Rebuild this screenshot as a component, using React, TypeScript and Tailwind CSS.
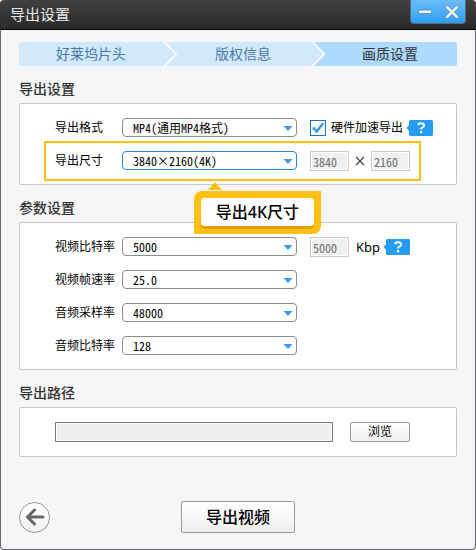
import { useId, useState } from "react";
import type { ReactNode } from "react";
import { clsx } from "clsx";

const STEPS = ["好莱坞片头", "版权信息", "画质设置"];

const PARAMS = [
  { label: "视频比特率", options: ["5000", "8000"] },
  { label: "视频帧速率", options: ["25.0", "30.0"] },
  { label: "音频采样率", options: ["48000", "44100"] },
  { label: "音频比特率", options: ["128", "192"] },
];

export default function App() {
  const [hardware, setHardware] = useState(true);

  return (
    <div className="flex min-h-screen flex-col bg-white font-['Noto_Sans','Noto_Sans_CJK_SC',sans-serif] text-xs text-black">
      <TitleBar />
      <main className="flex-1 rounded-b-[4px] border border-t-0 border-[#66676b] bg-[#f5f6f8] px-[18px] pt-3 pb-4">
        <Steps current={2} />

        <Section title="导出设置">
          <Row>
            <Field label="导出格式" options={["MP4(通用MP4格式)", "AVI"]} />
            <label className="flex items-center gap-[5px] whitespace-nowrap">
              <span className="relative flex">
                <input
                  type="checkbox"
                  checked={hardware}
                  onChange={(e) => setHardware(e.target.checked)}
                  className="h-4 w-4 appearance-none border border-[#1b74bd] bg-white"
                />
                {hardware && (
                  <svg viewBox="0 0 16 16" className="pointer-events-none absolute inset-0 h-4 w-4">
                    <path d="M2 8.2 4 6.6 6.4 9.4 12.4 2.6 14.4 3.4 6.8 13.6Z" fill="#3a9ced" />
                  </svg>
                )}
              </span>
              硬件加速导出
            </label>
            <HelpButton />
          </Row>

          {/* 高亮行 */}
          <Row>
            <Field label="导出尺寸" options={["3840×2160(4K)", "1920×1080"]} active />
            <SmallInput label="宽度" value="3840" />
            <svg viewBox="0 0 10 10" className="mx-1.5 h-2.5 w-2.5" stroke="#444" strokeWidth="1.2">
              <path d="M1 1 9 9M9 1 1 9" />
            </svg>
            <SmallInput label="高度" value="2160" />
            <div className="pointer-events-none absolute -inset-x-[11px] -inset-y-[10px] border-2 border-[#ffc012]" />
            <Callout text="导出4K尺寸" />
          </Row>
        </Section>

        <Section title="参数设置">
          {PARAMS.map((p, i) => (
            <Row key={p.label}>
              <Field label={p.label} options={p.options} />
              {i === 0 && (
                <>
                  <SmallInput label="自定义比特率" value="5000" />
                  <span className="ml-[7px] text-[13px] leading-5">Kbp</span>
                  <HelpButton />
                </>
              )}
            </Row>
          ))}
        </Section>

        <Section title="导出路径">
          <div className="flex h-[21px] gap-[17px]">
            <input
              type="text"
              aria-label="导出路径"
              readOnly
              className="h-5 w-[278px] border border-[#77787a] bg-[#efefef] px-1 shadow-[inset_0_0_0_1px_#fff] outline-none"
            />
            <button className="h-5 w-[60px] rounded-[2px] border border-[#999] bg-linear-to-b from-white to-[#efefef] leading-[18px]">
              浏览
            </button>
          </div>
        </Section>

        <footer className="mt-11 grid grid-cols-[1fr_auto_1fr] items-center">
          <button
            aria-label="返回"
            className="flex h-[31px] w-[31px] items-center justify-center rounded-full border border-[#999] bg-linear-to-b from-white to-[#f0f0f0]"
          >
            <svg viewBox="0 0 20 20" className="h-5 w-5" fill="none" stroke="#666" strokeWidth="3" strokeLinecap="round" strokeLinejoin="round">
              <path d="M9.5 3 2.5 10 9.5 17M3.5 10H18" />
            </svg>
          </button>
          <button className="h-8 w-[114px] rounded-[2px] border border-[#999] bg-linear-to-b from-white to-[#efefef] text-base leading-[30px] font-medium">
            导出视频
          </button>
        </footer>
      </main>
    </div>
  );
}

function TitleBar() {
  return (
    <header className="flex h-[30px] items-start justify-between rounded-t-[4px] border-b border-black bg-linear-to-b from-[#404040] to-[#2a2a2a] pr-2.5 pl-2.5">
      <h1 className="text-[15px] leading-[29px] text-[#e8e8e8]">导出设置</h1>
      <div className="flex h-6 w-[56px] rounded-b-[4px] border border-t-0 border-[#5b6b78] bg-linear-to-b from-[#69bdf8] to-[#2a9ff5]">
        <button aria-label="最小化" className="flex flex-1 items-center justify-center">
          <svg viewBox="0 0 14 14" className="h-3.5 w-3.5">
            <rect x="0.5" y="5" width="13" height="3.6" rx="1" fill="#f4f4f4" stroke="#4c87b3" strokeWidth="0.8" />
          </svg>
        </button>
        <button aria-label="关闭" className="flex flex-1 items-center justify-center">
          <svg viewBox="0 0 14 14" className="h-3.5 w-3.5" strokeLinecap="round">
            <path d="M2 2 12 12M12 2 2 12" stroke="#4c87b3" strokeWidth="3.8" />
            <path d="M2 2 12 12M12 2 2 12" stroke="#f4f4f4" strokeWidth="2.5" />
          </svg>
        </button>
      </div>
    </header>
  );
}

function Steps({ current }: { current: number }) {
  return (
    <ol className="grid h-6 grid-cols-[144fr_148fr_146fr] overflow-hidden rounded-[2px] text-sm leading-[23px]">
      {STEPS.map((s, i) => (
        <li
          key={s}
          className={clsx(
            "relative text-center",
            i === current ? "bg-[#aedaff] text-[#333]" : "bg-[#d2e8fd] text-[#4a7aa5]",
            i > 0 && "pl-3",
          )}
        >
          {i > 0 && (
            <svg viewBox="0 0 15 24" className="absolute top-0 left-0 h-6 w-[15px]">
              <path d="M0 0H1L13 12 1 24H0Z" fill="#d2e8fd" />
              <path d="M1 -0.5 13.3 12 1 24.5" fill="none" stroke="#f8fafc" strokeWidth="2" />
            </svg>
          )}
          {s}
        </li>
      ))}
    </ol>
  );
}

function Section({ title, children }: { title: string; children: ReactNode }) {
  return (
    <section>
      <h2 className="pt-[13px] pb-1 text-sm leading-5 font-medium text-[#333]">{title}</h2>
      <div className="flex flex-col gap-[13px] rounded-[2px] border border-[#c8c8c8] bg-white pt-3.5 pb-[13px] pl-[35px]">
        {children}
      </div>
    </section>
  );
}

function Row({ children }: { children: ReactNode }) {
  return <div className="relative flex h-5 w-fit items-center">{children}</div>;
}

function Field({ label, options, active }: { label: string; options: string[]; active?: boolean }) {
  const id = useId();
  return (
    <div className="mr-[13px] flex h-5 items-start">
      <label htmlFor={id} className="w-[67px] leading-5 whitespace-nowrap">
        {label}
      </label>
      <div className="relative">
        <select
          id={id}
          className={clsx(
            "block h-[19px] w-[175px] appearance-none rounded-[4px] border bg-white pl-2.5 font-['Noto_Sans_Mono_CJK_SC','Liberation_Mono','Noto_Sans_CJK_SC',monospace] text-xs leading-[17px] outline-none",
            active ? "border-[#2488e0]" : "border-[#8c8c8c]",
          )}
        >
          {options.map((o) => (
            <option key={o}>{o}</option>
          ))}
        </select>
        <svg viewBox="0 0 10 5" className="pointer-events-none absolute top-2 right-1 h-[5px] w-2.5">
          <path d="M0.5 0H9.5L5 5Z" fill="#3a9ced" />
        </svg>
      </div>
    </div>
  );
}

function SmallInput({ label, value }: { label: string; value: string }) {
  return (
    <input
      type="text"
      aria-label={label}
      defaultValue={value}
      disabled
      className="h-5 w-[39px] border border-[#c8c8c8] bg-[#f0f0f0] pl-0.5 font-['Noto_Sans_Mono_CJK_SC','Liberation_Mono',monospace] text-xs text-[#6d6d6d] shadow-[inset_0_0_0_1px_#fff]"
    />
  );
}

function HelpButton() {
  return (
    <button aria-label="帮助" className="ml-[3px] flex h-4">
      <svg viewBox="0 0 27 16" className="h-4 w-[27px]">
        <path d="M4.5 0H25.5Q27 0 27 1.5V14.5Q27 16 25.5 16H4.5Q3 16 3 14.5V11L0.6 8 3 5V1.5Q3 0 4.5 0Z" fill="#259cf4" />
        <path d="M12 5.2Q12.2 3.2 15 3.2 18 3.2 18 5.4 18 6.8 16.4 7.6 15 8.3 15 9.6" fill="none" stroke="#fff" strokeWidth="2" />
        <rect x="14" y="11" width="2.2" height="2.2" fill="#fff" />
      </svg>
    </button>
  );
}

// 指向高亮行的气泡提示
function Callout({ text }: { text: string }) {
  return (
    <div className="absolute top-[31px] left-[139px] z-10">
      <svg viewBox="0 0 14 8" className="ml-3.5 h-2 w-3.5">
        <path d="M7 0 14 8H0Z" fill="#ffc012" />
      </svg>
      <div className="mt-px rounded-tl-[8px] rounded-br-[8px] bg-[#ffc012] px-[7px] pt-[7px] pb-2">
        <div className="w-[113px] rounded-[4px] bg-white text-center text-base leading-7 font-medium whitespace-nowrap shadow-[0_3px_0_#e3a008]">
          {text}
        </div>
      </div>
    </div>
  );
}
